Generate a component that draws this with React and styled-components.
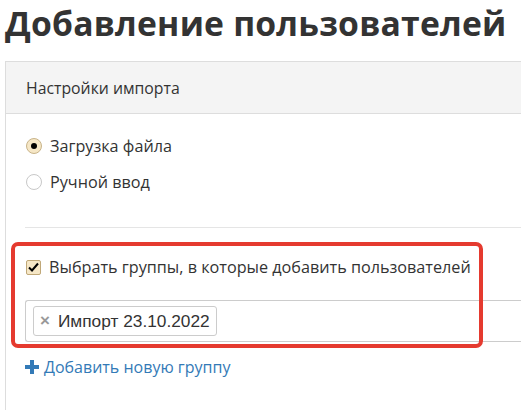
import styled, { createGlobalStyle } from "styled-components";

const GlobalStyle = createGlobalStyle`
  html, body {
    margin: 0;
    padding: 0;
    background: #fff;
    overflow: hidden;
  }
  body {
    font-family: "Open Sans", "Lato", sans-serif;
    color: #333;
  }
`;

const Page = styled.div`
  width: 521px;
  height: 410px;
  overflow: hidden;
  padding-left: 5px;
  box-sizing: border-box;
`;

const Title = styled.h1`
  margin: 0;
  font-family: "Open Sans", sans-serif;
  font-weight: 700;
  font-size: 33.7px;
  line-height: 46px;
  letter-spacing: 0.2px;
  color: #333;
  white-space: nowrap;
`;

const Panel = styled.section`
  margin-top: 15px;
  width: 600px;
  border: 1px solid #ddd;
  border-right: none;
`;

const PanelHeader = styled.div`
  height: 51px;
  background: #f4f4f4;
  border-bottom: 1px solid #ddd;
  display: flex;
  align-items: center;
  padding-left: 20px;
  font-size: 15.8px;
  color: #333;
`;

const PanelBody = styled.div`
  position: relative;
  padding: 22px 0 0 19px;
`;

const Options = styled.div`
  display: flex;
  flex-direction: column;
  gap: 16px;
  padding-bottom: 35px;
  border-bottom: 1px solid #e5e5e5;
`;

const Option = styled.label`
  display: flex;
  align-items: center;
  gap: 8px;
  font-size: 16.2px;
  height: 20px;
  color: #333;
  white-space: nowrap;
`;

const Radio = styled.span`
  width: 14px;
  height: 14px;
  border-radius: 50%;
  border: 1px solid ${(p) => (p.$checked ? "#c9b48a" : "#c8c8c8")};
  background: ${(p) => (p.$checked ? "#f6e7c6" : "#fff")};
  display: flex;
  align-items: center;
  justify-content: center;
  margin-left: 1px;
  &::after {
    content: "";
    width: 6px;
    height: 6px;
    border-radius: 50%;
    background: ${(p) => (p.$checked ? "#000" : "transparent")};
  }
`;

const Groups = styled.div`
  padding-top: 29px;
`;

const Checkbox = styled.span`
  width: 13px;
  height: 13px;
  border: 1px solid #c0a878;
  border-radius: 2px;
  background: #f6e7c6;
  display: flex;
  align-items: center;
  justify-content: center;
  margin-left: 1px;
`;

const SelectBox = styled.div`
  margin-top: 23px;
  height: 40px;
  border: 1px solid #ccc;
  border-right: none;
  border-radius: 3px 0 0 3px;
  display: flex;
  align-items: center;
  padding-left: 7px;
`;

const Tag = styled.span`
  height: 28px;
  display: flex;
  align-items: center;
  gap: 8px;
  padding: 0 6px 0 6px;
  border: 1px solid #ccc;
  border-radius: 3px;
  font-family: "Liberation Sans", Arial, sans-serif;
  font-size: 17.3px;
  color: #333;
`;

const Remove = styled.span`
  color: #999;
  font-weight: 700;
  font-size: 17px;
  font-family: "Liberation Sans", Arial, sans-serif;
`;

const AddLink = styled.a`
  margin-top: 15px;
  display: flex;
  align-items: center;
  gap: 5px;
  color: #337ab7;
  font-size: 16px;
  text-decoration: none;
  height: 20px;
`;

const Divider = styled.div`
  margin-top: 37px;
  border-top: 1px solid #e5e5e5;
`;

const Highlight = styled.div`
  position: absolute;
  left: 5px;
  top: 128px;
  width: 464px;
  height: 98px;
  border: 4px solid #e53a2f;
  border-radius: 7px;
  pointer-events: none;
`;

const PlusIcon = () => (
  <svg width="14" height="14" viewBox="0 0 14 14">
    <path d="M5 0h4v5h5v4H9v5H5V9H0V5h5z" fill="#337ab7" />
  </svg>
);

const CheckIcon = () => (
  <svg width="11" height="10" viewBox="0 0 11 10">
    <path d="M1 5.5l3 3L10 1.5" fill="none" stroke="#000" strokeWidth="2" />
  </svg>
);

export default function App() {
  return (
    <Page>
      <GlobalStyle />
      <Title>Добавление пользователей</Title>
      <Panel>
        <PanelHeader>Настройки импорта</PanelHeader>
        <PanelBody>
          <Options>
            <Option>
              <Radio $checked />
              Загрузка файла
            </Option>
            <Option>
              <Radio />
              Ручной ввод
            </Option>
          </Options>
          <Groups>
            <Option>
              <Checkbox>
                <CheckIcon />
              </Checkbox>
              Выбрать группы, в которые добавить пользователей
            </Option>
            <SelectBox>
              <Tag>
                <Remove>×</Remove>
                Импорт 23.10.2022
              </Tag>
            </SelectBox>
            <AddLink href="#">
              <PlusIcon />
              Добавить новую группу
            </AddLink>
            <Divider />
          </Groups>
          <Highlight />
        </PanelBody>
      </Panel>
    </Page>
  );
}
